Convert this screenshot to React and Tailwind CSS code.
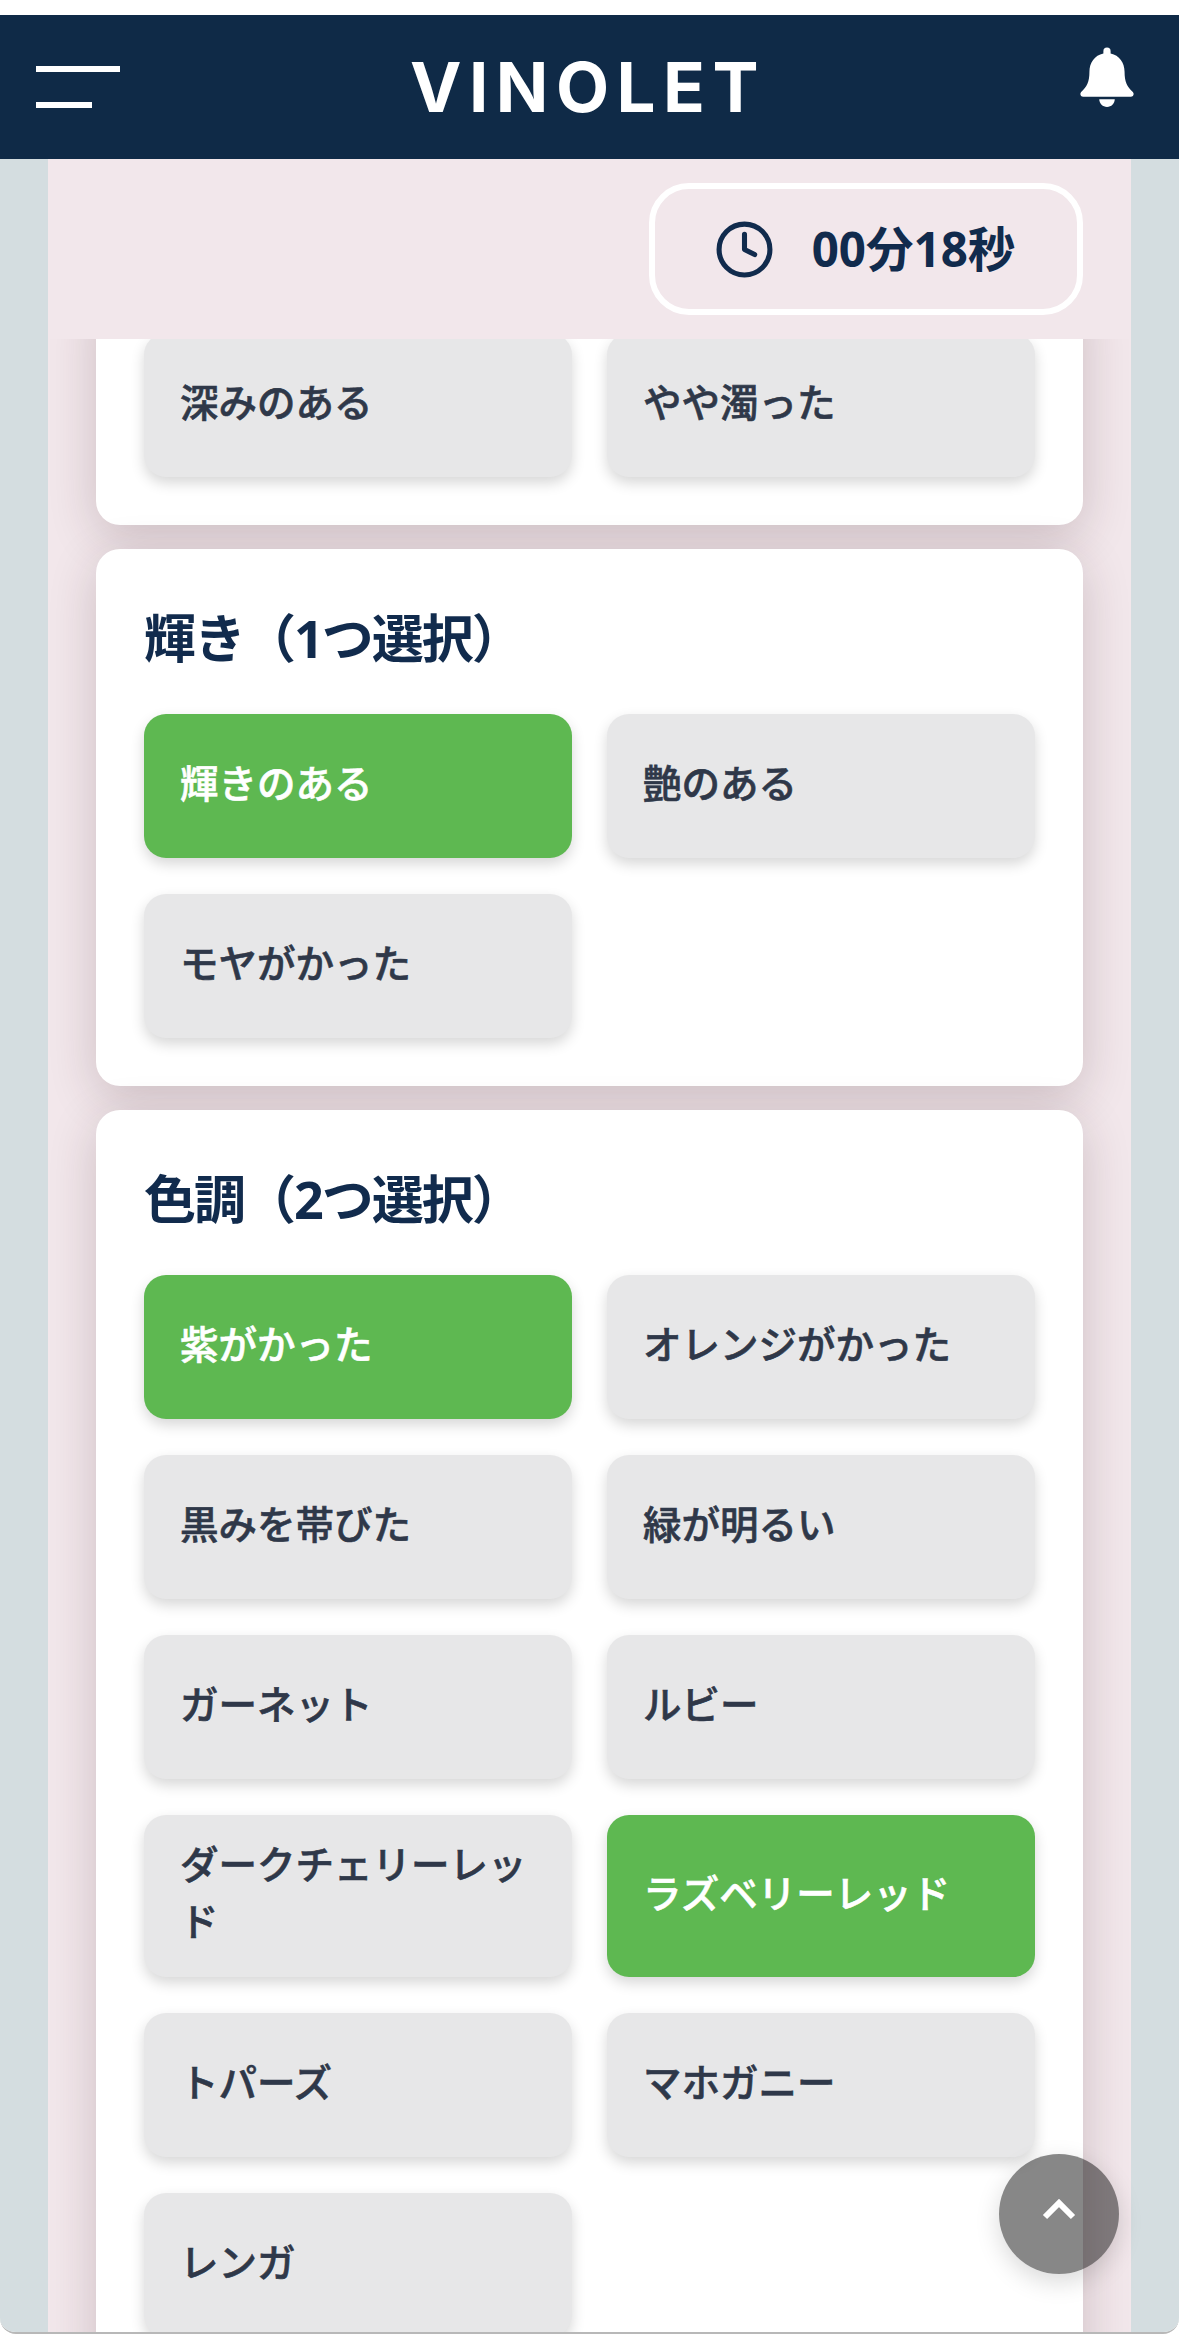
import { Clock } from 'lucide-react';

const cjk = 'font-["Noto_Sans","Noto_Sans_CJK_JP",sans-serif]';

// Trait groups for the tasting sheet; first one is scrolled partly under the timer bar
const groups = [
  {
    id: 'depth',
    options: [{ label: '深みのある' }, { label: 'やや濁った' }],
  },
  {
    id: 'shine',
    title: '輝き（1つ選択）',
    options: [{ label: '輝きのある', selected: true }, { label: '艶のある' }, { label: 'モヤがかった' }],
  },
  {
    id: 'tone',
    title: '色調（2つ選択）',
    options: [
      { label: '紫がかった', selected: true },
      { label: 'オレンジがかった' },
      { label: '黒みを帯びた' },
      { label: '緑が明るい' },
      { label: 'ガーネット' },
      { label: 'ルビー' },
      { label: 'ダークチェリーレッド' },
      { label: 'ラズベリーレッド', selected: true },
      { label: 'トパーズ' },
      { label: 'マホガニー' },
      { label: 'レンガ' },
    ],
  },
];

function BellIcon() {
  return (
    <svg width="54" height="62" viewBox="0 0 52 60" fill="white">
      <path d="M22.5 6a3.5 3.5 0 0 1 7 0v2.2C38 10 43 17 43 26c0 10 2.5 14.5 8 19.5 1.6 1.6.6 4.5-2 4.5H3c-2.6 0-3.6-2.9-2-4.5C6.5 40.5 9 36 9 26 9 17 14 10 22.5 8.2z" />
      <path d="M18.5 52.5h15c0 4-3.4 7.5-7.5 7.5s-7.5-3.5-7.5-7.5z" />
    </svg>
  );
}

function OptionButton({ label, selected }) {
  return (
    <button
      className={`flex min-h-[144px] items-center rounded-[22px] px-9 pt-[21px] pb-[27px] text-left text-[38.5px] leading-[57px] font-medium [-webkit-text-stroke:0.6px_currentColor] shadow-[0_6px_14px_rgba(0,0,0,0.16)] ${
        selected ? 'bg-[#5eb851] text-white' : 'bg-[#e7e7e8] text-[#2f3849]'
      }`}
    >
      {label}
    </button>
  );
}

function GroupCard({ title, options, className = '' }) {
  return (
    <section className={`rounded-[24px] bg-white p-12 shadow-[0_12px_48px_rgba(60,30,40,0.2)] ${className}`}>
      {title && <h2 className="mb-9 text-[52px] leading-[81px] font-bold tracking-[-2px] text-[#112b4d]">{title}</h2>}
      <div className="grid grid-cols-2 gap-x-[35px] gap-y-9">
        {options.map((o) => (
          <OptionButton key={o.label} label={o.label} selected={o.selected} />
        ))}
      </div>
    </section>
  );
}

export default function App() {
  return (
    <div className={`relative h-[2334px] w-[1179px] overflow-hidden bg-white pt-[15px] ${cjk}`}>
      <div className="flex h-full flex-col overflow-hidden rounded-b-[16px] border-b-2 border-[#b8b8b8]">
        {/* Top bar */}
        <header className="grid h-[144px] shrink-0 grid-cols-[1fr_auto_1fr] items-center bg-[#0f2a47] pr-[45px] pl-9">
          <div className="flex h-[42px] flex-col justify-between">
            <span className="block h-[6px] w-[84px] bg-white" />
            <span className="block h-[6px] w-[56px] bg-white" />
          </div>
          <h1 className="ml-[6px] font-['Inter',sans-serif] text-[69px] leading-none font-bold tracking-[7.5px] text-white">VINOLET</h1>
          <div className="-mt-[22px] flex justify-end">
            <BellIcon />
          </div>
        </header>

        <div className="flex min-h-0 flex-1 flex-col bg-[#d4dde0] px-12">
          <div className="flex min-h-0 flex-1 flex-col bg-[#f2e7eb]">
            {/* Elapsed time */}
            <div className="flex h-[180px] shrink-0 justify-end pt-6 pr-12">
              <div className="flex h-[132px] w-[434px] items-center justify-center gap-[37px] rounded-[40px] border-[6px] border-white pr-[3px] text-[47.5px] font-bold text-[#112b4d]">
                <Clock size={61} strokeWidth={2} />
                <span>00分18秒</span>
              </div>
            </div>

            <div className="flex min-h-0 flex-1 flex-col gap-6 overflow-hidden px-12">
              {groups.map((g, i) => (
                <GroupCard
                  key={g.id}
                  title={g.title}
                  options={g.options}
                  className={i === 0 ? '-mt-[54px] shrink-0' : 'shrink-0'}
                />
              ))}
            </div>
          </div>
        </div>
      </div>

      {/* Back to top */}
      <button className="absolute top-[2154px] left-[999px] flex size-[120px] items-center justify-center rounded-full bg-black/[0.47] shadow-[0_8px_24px_rgba(0,0,0,0.15)]">
        <svg width="36" height="24" viewBox="0 0 36 24" fill="none" stroke="white" strokeWidth="6" className="-mt-[10px]">
          <path d="M4 20 18 6l14 14" />
        </svg>
      </button>
    </div>
  );
}
